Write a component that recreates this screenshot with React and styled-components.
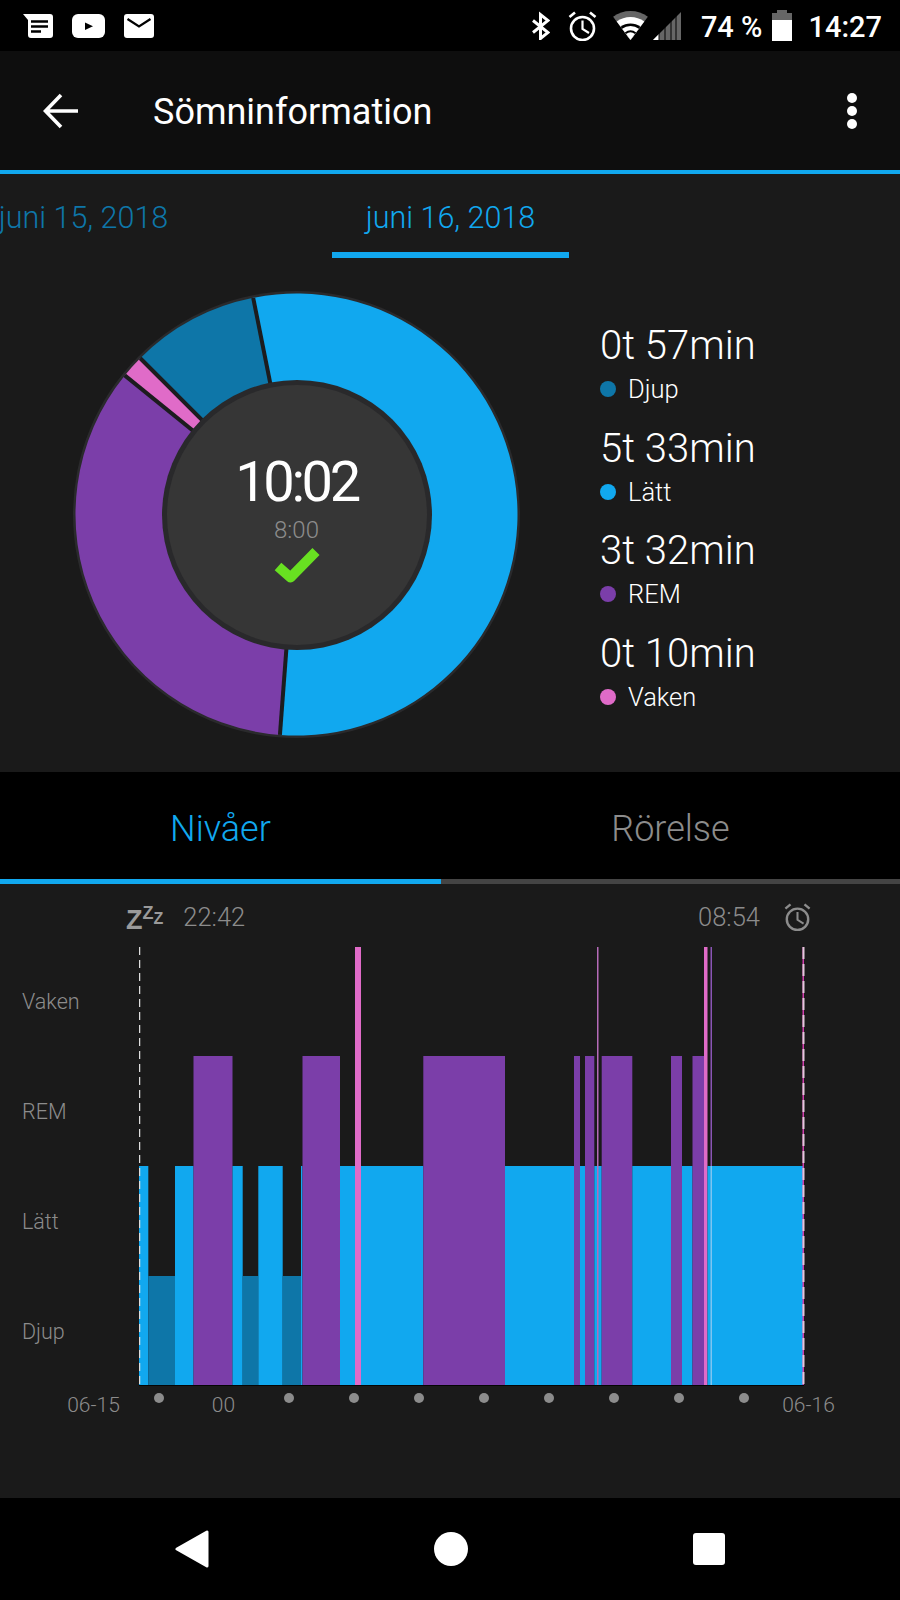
import React from 'react'
import styled, { createGlobalStyle } from 'styled-components'

const LIGHT = '#11a8ef'
const DEEP = '#0e76a8'
const REM = '#7b3ea9'
const AWAKE = '#e06bc8'

const GlobalStyle = createGlobalStyle`
  html, body {
    margin: 0;
    padding: 0;
    background: #000;
  }
  * {
    box-sizing: border-box;
  }
`

const Screen = styled.div`
  width: 900px;
  height: 1600px;
  display: flex;
  flex-direction: column;
  overflow: hidden;
  background: #1a1a1a;
  color: #fff;
  font-family: Roboto, 'Liberation Sans', sans-serif;
`

const StatusBar = styled.div`
  height: 51px;
  flex: none;
  display: flex;
  align-items: center;
  justify-content: space-between;
  padding: 0 18px 0 23px;
  background: #000;
`

const StatusGroup = styled.div`
  display: flex;
  align-items: center;
  gap: ${(p) => p.$gap || 0}px;
`

const StatusSpacer = styled.span`
  width: ${(p) => p.$width}px;
`

const StatusText = styled.span`
  font-size: 29px;
  font-weight: 500;
  line-height: 45px;
  margin: ${(p) => p.$margin || '0'};
`

const Toolbar = styled.div`
  height: 123px;
  flex: none;
  display: flex;
  align-items: center;
  padding: 0 43px 0 43px;
  background: #0e0e0e;
  border-bottom: 4px solid ${LIGHT};
`

const ToolbarTitle = styled.h1`
  flex: 1;
  margin: 2px 0 0 74px;
  font-size: 36px;
  font-weight: 400;
`

const Kebab = styled.div`
  display: flex;
  flex-direction: column;
  gap: 3px;
`

const KebabDot = styled.span`
  width: 10px;
  height: 10px;
  border-radius: 50%;
  background: #fff;
`

const DatePager = styled.div`
  height: 84px;
  flex: none;
  display: flex;
  gap: 130px;
  margin-left: -35px;
`

const DateTab = styled.div`
  width: 237px;
  flex: none;
  padding-top: 24px;
  text-align: center;
  font-size: 30.5px;
  line-height: 40px;
  font-weight: 300;
  color: ${(p) => (p.$active ? LIGHT : DEEP)};
  border-bottom: 6px solid ${(p) => (p.$active ? LIGHT : 'transparent')};
`

const Summary = styled.div`
  height: 514px;
  flex: none;
  display: flex;
  padding: 33px 0 0 73px;
`

const Donut = styled.div`
  position: relative;
  width: 447px;
  height: 447px;
  flex: none;
`

const DonutCenter = styled.div`
  position: absolute;
  inset: 0;
  display: flex;
  flex-direction: column;
  align-items: center;
  padding-top: 158px;
`

const TotalTime = styled.div`
  font-size: 56px;
  line-height: 66px;
  font-weight: 400;
  letter-spacing: -3.4px;
`

const GoalTime = styled.div`
  font-size: 24px;
  line-height: 30px;
  font-weight: 300;
  color: #8c8c8c;
`

const Legend = styled.div`
  margin: 30px 0 0 80px;
  display: flex;
  flex-direction: column;
`

const LegendRow = styled.div`
  height: 102.5px;
`

const LegendTime = styled.div`
  font-size: 40px;
  line-height: 50px;
  font-weight: 300;
`

const LegendLabel = styled.div`
  display: flex;
  align-items: center;
  gap: 12px;
  font-size: 25.5px;
  line-height: 36px;
  font-weight: 300;
`

const LegendDot = styled.span`
  width: 16px;
  height: 16px;
  border-radius: 50%;
  background: ${(p) => p.$color};
`

const Tabs = styled.div`
  height: 112px;
  flex: none;
  display: grid;
  grid-template-columns: 441px 459px;
  background: #000;
`

const Tab = styled.div`
  display: flex;
  align-items: center;
  justify-content: center;
  padding-top: 6px;
  font-size: 36px;
  font-weight: 300;
  color: ${(p) => (p.$active ? LIGHT : '#8c8c8c')};
  border-bottom: 5px solid ${(p) => (p.$active ? LIGHT : '#444')};
`

const ChartSection = styled.div`
  flex: 1;
  display: flex;
  flex-direction: column;
`

const TimeRow = styled.div`
  height: 63px;
  flex: none;
  display: flex;
  align-items: center;
  justify-content: space-between;
  padding: 3px 89px 0 126px;
`

const TimeGroup = styled.div`
  display: flex;
  align-items: center;
  gap: ${(p) => p.$gap}px;
`

const TimeText = styled.span`
  font-size: 25.5px;
  font-weight: 300;
  color: #8c8c8c;
`

const Snooze = styled.div`
  display: flex;
  align-items: flex-start;
  height: 26px;
  color: #9a9a9a;
  font-family: 'Liberation Sans', sans-serif;
  font-weight: 700;
`

const SnoozeLetter = styled.span`
  font-size: ${(p) => p.$size}px;
  line-height: ${(p) => p.$size}px;
  margin-top: ${(p) => p.$top}px;
`

const ChartRow = styled.div`
  display: flex;
  height: 439px;
  flex: none;
`

const YAxis = styled.div`
  width: 139px;
  flex: none;
  display: grid;
  grid-template-rows: repeat(4, 1fr);
  padding: 0 0 0 22px;
`

const YLabel = styled.div`
  display: flex;
  align-items: center;
  font-size: 21.5px;
  font-weight: 300;
  color: #8c8c8c;
`

const XAxis = styled.div`
  display: flex;
  margin: 3px 0 0 61px;
`

const XCell = styled.div`
  width: 65px;
  flex: none;
  height: 32px;
  display: flex;
  justify-content: center;
  font-size: 21px;
  line-height: 32px;
  font-weight: 300;
  color: #8c8c8c;
  white-space: nowrap;
`

const XDot = styled.span`
  width: 10px;
  height: 10px;
  margin-top: 4px;
  border-radius: 50%;
  background: #8c8c8c;
`

const NavBar = styled.div`
  height: 102px;
  flex: none;
  display: flex;
  align-items: center;
  justify-content: space-between;
  padding: 0 175px;
  background: #000;
`

const NavCircle = styled.span`
  width: 34px;
  height: 34px;
  border-radius: 50%;
  background: #fff;
`

const NavSquare = styled.span`
  width: 32px;
  height: 32px;
  border-radius: 3px;
  background: #fff;
`

function MessageIcon() {
  return (
    <svg width="30" height="24" viewBox="0 0 30 24">
      <path d="M0 0H27a3 3 0 0 1 3 3V21a3 3 0 0 1-3 3H8a3 3 0 0 1-3-3V6Z" fill="#fff" />
      <path d="M8 7.5H25M8 12.5H25M8 17.5H18" stroke="#000" strokeWidth="2.4" />
    </svg>
  )
}

function VideoIcon() {
  return (
    <svg width="33" height="24" viewBox="0 0 33 24">
      <rect width="33" height="24" rx="6" fill="#fff" />
      <path d="M13 8.5V16L21 12.2Z" fill="#000" />
    </svg>
  )
}

function MailIcon() {
  return (
    <svg width="30" height="24" viewBox="0 0 30 24">
      <rect width="30" height="24" rx="3" fill="#fff" />
      <path d="M3.5 5L15 12.5L26.5 5" fill="none" stroke="#000" strokeWidth="2.2" />
    </svg>
  )
}

function BluetoothIcon() {
  return (
    <svg width="19" height="29" viewBox="0 0 19 29">
      <path d="M2 9.5L17 21.5L9.5 27.5V3.5L17 9.5L2 21.5" fill="none" stroke="#fff" strokeWidth="3" />
    </svg>
  )
}

function AlarmIcon({ color = '#fff', size = 29 }) {
  return (
    <svg width={size} height={size + 1} viewBox="0 0 29 30" fill="none" stroke={color}>
      <circle cx="14.5" cy="17.5" r="11.5" strokeWidth="2.6" />
      <path d="M14.5 9.5V18L21 22" strokeWidth="2.2" />
      <path d="M1.5 6L7 1.5M27.5 6L22 1.5" strokeWidth="2.6" />
    </svg>
  )
}

function fan(d) {
  const x = d * 0.6
  const y = d * 0.8
  return `M17.5 29L${17.5 - x} ${29 - y}A${d} ${d} 0 0 1 ${17.5 + x} ${29 - y}Z`
}

function WifiIcon() {
  return (
    <svg width="35" height="29" viewBox="0 0 35 29">
      <path d={fan(29)} fill="#666" />
      <path d={fan(23)} fill="#fff" />
      <path d={fan(16.5)} fill="#000" />
      <path d={fan(14)} fill="#fff" />
      <path d={fan(9.5)} fill="#000" />
      <path d={fan(7.5)} fill="#fff" />
    </svg>
  )
}

function SignalIcon() {
  return (
    <svg width="28" height="28" viewBox="0 0 28 28">
      <path d="M0 28L28 0V28Z" fill="#666" />
      <path d="M0 28L6 22V28Z" fill="#fff" />
      <path d="M6 0V28M12 0V28M18 0V28M23 0V28" stroke="#000" strokeWidth="1" />
    </svg>
  )
}

function BatteryIcon() {
  return (
    <svg width="20" height="31" viewBox="0 0 20 31">
      <rect x="5" width="10" height="4" fill="#666" />
      <rect y="3" width="20" height="8" fill="#666" />
      <rect y="10" width="20" height="21" fill="#fff" />
    </svg>
  )
}

function BackIcon() {
  return (
    <svg width="36" height="36" viewBox="0 0 36 36" fill="none" stroke="#fff" strokeWidth="3.6">
      <path d="M35 18H4M18 2L2.5 18L18 34" />
    </svg>
  )
}

function polar(r, deg) {
  const a = (deg * Math.PI) / 180
  return [223.5 + r * Math.sin(a), 223.5 - r * Math.cos(a)]
}

function sector(from, to) {
  const [x1, y1] = polar(221, from)
  const [x2, y2] = polar(221, to)
  const large = to - from > 180 ? 1 : 0
  return `M223.5 223.5L${x1} ${y1}A221 221 0 ${large} 1 ${x2} ${y2}Z`
}

const slices = [
  { from: -11.3, to: 184.3, color: LIGHT },
  { from: 184.3, to: 309, color: REM },
  { from: 309, to: 315, color: AWAKE },
  { from: 315, to: 348.7, color: DEEP },
]

function DonutChart() {
  return (
    <svg width="447" height="447" viewBox="0 0 447 447">
      <circle cx="223.5" cy="223.5" r="223.5" fill="#2a2a2c" />
      {slices.map((s) => (
        <path key={s.from} d={sector(s.from, s.to)} fill={s.color} />
      ))}
      {slices.map((s) => {
        const [x, y] = polar(221, s.from)
        return <line key={s.from} x1="223.5" y1="223.5" x2={x} y2={y} stroke="#1c1c1e" strokeWidth="4" />
      })}
      <circle cx="224" cy="224" r="135" fill="#29292b" />
      <circle cx="224" cy="224" r="130" fill="#363636" />
      <path d="M205 275.5L217.5 286.5L243 260.5" fill="none" stroke="#68e021" strokeWidth="10" strokeLinejoin="round" />
    </svg>
  )
}

// page x start, page x end, stage of the bar
const STAGE = { awake: 0, rem: 109, light: 219, deep: 329 }
const COLORS = { awake: AWAKE, rem: REM, light: LIGHT, deep: DEEP }
const segments = [
  [139, 148.3, 'light'],
  [148.3, 175, 'deep'],
  [175, 193.5, 'light'],
  [193.5, 232.5, 'rem'],
  [232.5, 242.7, 'light'],
  [242.7, 258.3, 'deep'],
  [258.3, 282.7, 'light'],
  [282.7, 301, 'deep'],
  [301, 302.5, 'light'],
  [302.5, 340, 'rem'],
  [340, 355, 'light'],
  [355, 361, 'awake'],
  [361, 423.3, 'light'],
  [423.3, 505, 'rem'],
  [505, 574, 'light'],
  [574, 580, 'rem'],
  [580, 585, 'light'],
  [585, 594.3, 'rem'],
  [594.3, 601.7, 'light'],
  [601.7, 632.3, 'rem'],
  [632.3, 671, 'light'],
  [671, 682, 'rem'],
  [682, 692.5, 'light'],
  [692.5, 704, 'rem'],
  [704, 707.5, 'awake'],
  [707.5, 803.5, 'light'],
]

function SleepChart() {
  return (
    <svg width="680" height="439" viewBox="0 0 680 439">
      {segments.map(([from, to, stage]) => (
        <rect
          key={from}
          x={from - 139}
          y={STAGE[stage]}
          width={to - from}
          height={439 - STAGE[stage]}
          fill={COLORS[stage]}
        />
      ))}
      <rect x="458" width="1.5" height="439" fill="#b56bb8" />
      <rect x="571.5" width="1.5" height="219" fill="#8a55b5" />
      <rect x="571.5" y="219" width="1.5" height="220" fill="#7fc4f0" />
      <rect x="663.5" width="1.5" height="439" fill="#d23fae" />
      <line x1="0.5" y1="0" x2="0.5" y2="439" stroke="#ddd" strokeWidth="1.5" strokeDasharray="8 5" />
      <line x1="664.5" y1="0" x2="664.5" y2="439" stroke="#e3c8dc" strokeWidth="2" strokeDasharray="12 5" />
      <line x1="0" y1="438.5" x2="665" y2="438.5" stroke="#050505" />
    </svg>
  )
}

const legend = [
  { time: '0t 57min', label: 'Djup', color: DEEP },
  { time: '5t 33min', label: 'Lätt', color: LIGHT },
  { time: '3t 32min', label: 'REM', color: REM },
  { time: '0t 10min', label: 'Vaken', color: AWAKE },
]

const xCells = ['06-15', null, '00', null, null, null, null, null, null, null, null, '06-16']

export default function App() {
  return (
    <Screen>
      <GlobalStyle />
      <StatusBar>
        <StatusGroup $gap={19}>
          <MessageIcon />
          <VideoIcon />
          <MailIcon />
        </StatusGroup>
        <StatusGroup>
          <BluetoothIcon />
          <StatusSpacer $width={18} />
          <AlarmIcon />
          <StatusSpacer $width={16} />
          <WifiIcon />
          <StatusSpacer $width={5} />
          <SignalIcon />
          <StatusText $margin="4px 10px 0 20px">74 %</StatusText>
          <BatteryIcon />
          <StatusText $margin="4px 0 0 16px">14:27</StatusText>
        </StatusGroup>
      </StatusBar>

      <Toolbar>
        <BackIcon />
        <ToolbarTitle>Sömninformation</ToolbarTitle>
        <Kebab>
          <KebabDot />
          <KebabDot />
          <KebabDot />
        </Kebab>
      </Toolbar>

      <DatePager>
        <DateTab>juni 15, 2018</DateTab>
        <DateTab $active>juni 16, 2018</DateTab>
      </DatePager>

      <Summary>
        <Donut>
          <DonutChart />
          <DonutCenter>
            <TotalTime>10:02</TotalTime>
            <GoalTime>8:00</GoalTime>
          </DonutCenter>
        </Donut>
        <Legend>
          {legend.map((item) => (
            <LegendRow key={item.label}>
              <LegendTime>{item.time}</LegendTime>
              <LegendLabel>
                <LegendDot $color={item.color} />
                {item.label}
              </LegendLabel>
            </LegendRow>
          ))}
        </Legend>
      </Summary>

      <Tabs>
        <Tab $active>Nivåer</Tab>
        <Tab>Rörelse</Tab>
      </Tabs>

      <ChartSection>
        <TimeRow>
          <TimeGroup $gap={20}>
            <Snooze>
              <SnoozeLetter $size={27} $top={3}>Z</SnoozeLetter>
              <SnoozeLetter $size={18} $top={0}>Z</SnoozeLetter>
              <SnoozeLetter $size={16} $top={7}>Z</SnoozeLetter>
            </Snooze>
            <TimeText>22:42</TimeText>
          </TimeGroup>
          <TimeGroup $gap={24}>
            <TimeText>08:54</TimeText>
            <AlarmIcon color="#8c8c8c" size={27} />
          </TimeGroup>
        </TimeRow>
        <ChartRow>
          <YAxis>
            <YLabel>Vaken</YLabel>
            <YLabel>REM</YLabel>
            <YLabel>Lätt</YLabel>
            <YLabel>Djup</YLabel>
          </YAxis>
          <SleepChart />
        </ChartRow>
        <XAxis>
          {xCells.map((text, i) => (
            <XCell key={i}>{text || <XDot />}</XCell>
          ))}
        </XAxis>
      </ChartSection>

      <NavBar>
        <svg width="34" height="40" viewBox="0 0 34 40">
          <path d="M32 3V37L2 20Z" fill="#fff" stroke="#fff" strokeWidth="3" strokeLinejoin="round" />
        </svg>
        <NavCircle />
        <NavSquare />
      </NavBar>
    </Screen>
  )
}
